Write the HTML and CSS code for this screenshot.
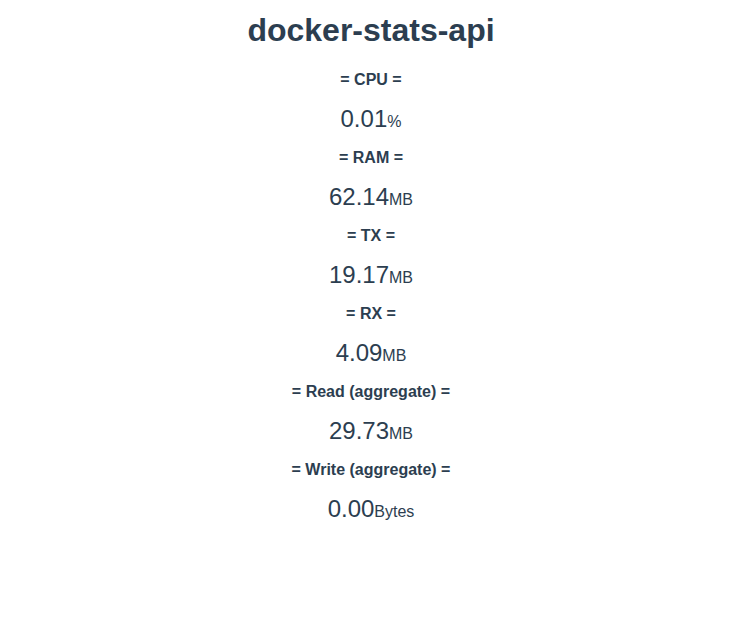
FILE: index.html
```html
<!DOCTYPE html>
<html>
<head>
<meta charset="utf-8">
<link rel="stylesheet" href="styles.css">
</head>
<body>
<div class="app">
  <h1 class="title">docker-stats-api</h1>
  <div class="stats">
    <div class="stat"><div class="label">= CPU =</div><div class="value">0.01<span class="unit">%</span></div></div>
    <div class="stat"><div class="label">= RAM =</div><div class="value">62.14<span class="unit">MB</span></div></div>
    <div class="stat"><div class="label">= TX =</div><div class="value">19.17<span class="unit">MB</span></div></div>
    <div class="stat"><div class="label">= RX =</div><div class="value">4.09<span class="unit">MB</span></div></div>
    <div class="stat"><div class="label">= Read (aggregate) =</div><div class="value">29.73<span class="unit">MB</span></div></div>
    <div class="stat"><div class="label">= Write (aggregate) =</div><div class="value">0.00<span class="unit">Bytes</span></div></div>
  </div>
</div>
</body>
</html>
```

FILE: styles.css
```css
html, body {
  margin: 0;
  background: #fff;
}
.app {
  font-family: "Liberation Sans", Arial, sans-serif;
  color: #2c3e50;
  text-align: center;
  padding-top: 12px;
  padding-left: 11px;
}
.title {
  font-size: 32px;
  line-height: 37px;
  font-weight: bold;
  margin: 0;
}
.stats {
  display: flex;
  flex-direction: column;
  margin-top: 21px;
}
.stat {
  display: flex;
  flex-direction: column;
  height: 78px;
}
.label {
  font-size: 16px;
  font-weight: bold;
  line-height: 20px;
}
.value {
  font-size: 24px;
  line-height: 28px;
  margin-top: 15px;
}
.unit {
  font-size: 16px;
}
```
